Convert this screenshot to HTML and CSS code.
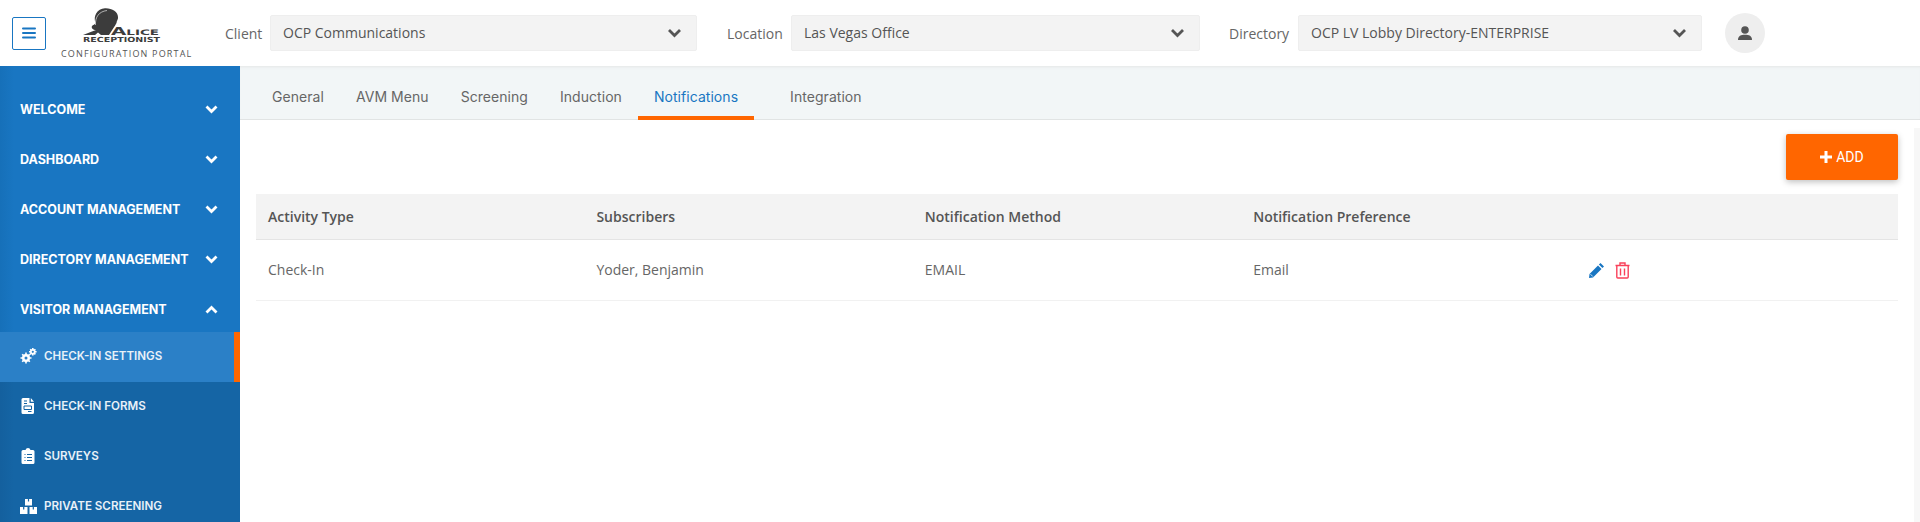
FILE: index.html
```html
<!DOCTYPE html>
<html lang="en">
<head>
<meta charset="utf-8">
<title>Alice Receptionist Configuration Portal</title>
<link rel="stylesheet" href="styles.css">
</head>
<body>
<header class="topbar">
  <button class="menu-btn" aria-label="Menu">
    <svg width="14" height="12" viewBox="0 0 14 12"><path d="M1 1.500h12M1 6h12M1 10.500h12" stroke="#1976c2" stroke-width="2" stroke-linecap="round"/></svg>
  </button>
  <div class="logo">
    <svg class="logo-mark" width="80" height="35" viewBox="0 0 80 35">
      <path d="M0 27 L9 23.500 L13 22 C10 22 8 20 9 18 C10 16.500 12 17 12.500 15 C10 8 14 1 22 0.300 C29 0 35 4 35 9 C35.500 11 33.500 13 33.500 15 C32 18 29 22 26 27 L18 27 L15 24.500 L12 27 Z" fill="#3c3c3c"/>
      <path d="M12.500 17 C12 9 16 3.500 24 2.500" stroke="#fff" stroke-width="0.600" fill="none"/>
      <text x="28" y="27" class="logo-alice" textLength="48" lengthAdjust="spacingAndGlyphs">A<tspan class="logo-small">LICE</tspan></text>
      <text x="0" y="34" class="logo-recep" textLength="77" lengthAdjust="spacingAndGlyphs">RECEPTIONIST</text>
    </svg>
    <div class="logo-caption">CONFIGURATION PORTAL</div>
  </div>
  <label class="field-label label-client">Client</label>
  <div class="select select-client"><span>OCP Communications</span>
    <svg class="caret" width="15" height="10" viewBox="0 0 15 10"><path d="M2 2 L7.500 7.500 L13 2" stroke="#555" stroke-width="2.800" fill="none"/></svg>
  </div>
  <label class="field-label label-location">Location</label>
  <div class="select select-location"><span>Las Vegas Office</span>
    <svg class="caret" width="15" height="10" viewBox="0 0 15 10"><path d="M2 2 L7.500 7.500 L13 2" stroke="#555" stroke-width="2.800" fill="none"/></svg>
  </div>
  <label class="field-label label-directory">Directory</label>
  <div class="select select-directory"><span>OCP LV Lobby Directory-ENTERPRISE</span>
    <svg class="caret" width="15" height="10" viewBox="0 0 15 10"><path d="M2 2 L7.500 7.500 L13 2" stroke="#555" stroke-width="2.800" fill="none"/></svg>
  </div>
  <div class="avatar">
    <svg width="14" height="14" viewBox="0 0 14 14"><circle cx="7" cy="4" r="3.800" fill="#555"/><path d="M0 14 C0 10 3 8.800 7 8.800 C11 8.800 14 10 14 14 Z" fill="#555"/></svg>
  </div>
</header>
<div class="layout">
  <nav class="sidebar">
    <div class="nav-item"><span>WELCOME</span><svg class="chev" width="13" height="9" viewBox="0 0 13 9"><path d="M1.500 1.500 L6.500 6.500 L11.500 1.500" stroke="#fff" stroke-width="2.800" fill="none"/></svg></div>
    <div class="nav-item"><span>DASHBOARD</span><svg class="chev" width="13" height="9" viewBox="0 0 13 9"><path d="M1.500 1.500 L6.500 6.500 L11.500 1.500" stroke="#fff" stroke-width="2.800" fill="none"/></svg></div>
    <div class="nav-item"><span>ACCOUNT MANAGEMENT</span><svg class="chev" width="13" height="9" viewBox="0 0 13 9"><path d="M1.500 1.500 L6.500 6.500 L11.500 1.500" stroke="#fff" stroke-width="2.800" fill="none"/></svg></div>
    <div class="nav-item"><span>DIRECTORY MANAGEMENT</span><svg class="chev" width="13" height="9" viewBox="0 0 13 9"><path d="M1.500 1.500 L6.500 6.500 L11.500 1.500" stroke="#fff" stroke-width="2.800" fill="none"/></svg></div>
    <div class="nav-item nav-open"><span>VISITOR MANAGEMENT</span><svg class="chev" width="13" height="9" viewBox="0 0 13 9"><path d="M1.500 7.500 L6.500 2.500 L11.500 7.500" stroke="#fff" stroke-width="2.800" fill="none"/></svg></div>
    <div class="submenu">
      <div class="sub-item active">
        <svg class="sub-icon" width="17" height="16" viewBox="0 0 17 16"><g fill="#fff"><circle cx="6" cy="10" r="4"/><circle cx="12.800" cy="3.800" r="2.700"/></g><g stroke="#fff" stroke-width="1.600"><path d="M6 4.500v11M.5 10h11M2.200 6.200l7.600 7.600M9.800 6.200l-7.600 7.600M12.800 0v7.600M9 3.800h7.600M10.200 1.200l5.200 5.200M15.400 1.200l-5.200 5.200"/></g><circle cx="6" cy="10" r="1.500" fill="#2b80c7"/><circle cx="12.800" cy="3.800" r="1.100" fill="#2b80c7"/></svg>
        <span>CHECK-IN SETTINGS</span></div>
      <div class="sub-item">
        <svg class="sub-icon" width="17" height="16" viewBox="0 0 17 16"><path d="M3 0 H9.500 V5 H14 V14.500 Q14 16 12.500 16 H3 Q1.500 16 1.500 14.500 V1.500 Q1.500 0 3 0Z M10.800 0 L14 3.700 H10.800Z" fill="#fff"/><path d="M4 3h3M4 5.500h3M4 8h7.500v3.500H4ZM8 13.500h3.500" stroke="#1565a5" stroke-width="1" fill="none"/></svg>
        <span>CHECK-IN FORMS</span></div>
      <div class="sub-item">
        <svg class="sub-icon" width="17" height="16" viewBox="0 0 17 16"><path d="M3 2 H5.500 Q6 0 8 0 Q10 0 10.500 2 H13 Q14.500 2 14.500 3.500 V14.500 Q14.500 16 13 16 H3 Q1.500 16 1.500 14.500 V3.500 Q1.500 2 3 2Z" fill="#fff"/><path d="M4.500 6.500h1M7 6.500h5M4.500 9.500h1M7 9.500h5M4.500 12.500h1M7 12.500h5" stroke="#1565a5" stroke-width="1.100"/></svg>
        <span>SURVEYS</span></div>
      <div class="sub-item">
        <svg class="sub-icon" width="17" height="16" viewBox="0 0 17 16"><path d="M5 1h7v6.500H5ZM0 9h7.500v7H0ZM9.500 9H17v7H9.500Z" fill="#fff"/><path d="M8.500 1v2.500M3.700 9v2.500M13.300 9v2.500" stroke="#1565a5" stroke-width="1.200"/></svg>
        <span>PRIVATE SCREENING</span></div>
    </div>
  </nav>
  <main class="main">
    <div class="tabs">
      <a class="tab">General</a>
      <a class="tab">AVM Menu</a>
      <a class="tab">Screening</a>
      <a class="tab">Induction</a>
      <a class="tab tab-active">Notifications</a>
      <a class="tab tab-gap">Integration</a>
    </div>
    <div class="panel">
      <div class="panel-body">
        <div class="toolbar">
          <button class="add-btn"><svg width="12" height="12" viewBox="0 0 12 12"><path d="M6 0v12M0 6h12" stroke="#fff" stroke-width="3"/></svg>ADD</button>
        </div>
        <table class="grid">
          <thead>
            <tr><th>Activity Type</th><th>Subscribers</th><th>Notification Method</th><th>Notification Preference</th><th></th></tr>
          </thead>
          <tbody>
            <tr>
              <td>Check-In</td><td>Yoder, Benjamin</td><td>EMAIL</td><td>Email</td>
              <td class="actions">
                <svg class="act-edit" width="17" height="17" viewBox="0 0 17 17"><path d="M12.500 1 L16 4.500 L14.400 6.100 L10.900 2.600 Z M10 3.500 L13.500 7 L5 15.500 L1 16 L1.500 12 Z" fill="#1976c2"/><path d="M2.500 12.200 L4.800 14.500" stroke="#fff" stroke-width="0.800"/></svg>
                <svg width="15" height="17" viewBox="0 0 15 17"><path d="M.5 3.500h14M5 3.500V1h5v2.500M1.800 3.500V15q0 1 1 1h9.400q1 0 1-1V3.500M5.500 6.500v7M9.500 6.500v7" stroke="#f9405a" stroke-width="1.400" fill="none"/></svg>
              </td>
            </tr>
          </tbody>
        </table>
      </div>
      <div class="scroll-track"></div>
    </div>
  </main>
</div>
</body>
</html>
```
FILE: styles.css
```css
* { box-sizing: border-box; }
html, body { margin: 0; height: 100%; overflow: hidden; }
body {
  display: flex;
  flex-direction: column;
  background: #fff;
  color: #555;
  font-family: "Open Sans", "Liberation Sans", sans-serif;
  font-size: 14px;
}

.topbar {
  height: 66px;
  flex: none;
  display: flex;
  align-items: center;
  padding-left: 12px;
  background: #fff;
}
.menu-btn {
  width: 34px;
  height: 33px;
  padding: 0;
  display: flex;
  align-items: center;
  justify-content: center;
  border: 1px solid #1976c2;
  border-radius: 2px;
  background: #fff;
}
.logo {
  width: 179px;
  height: 66px;
  display: flex;
  flex-direction: column;
  align-items: flex-start;
  padding: 8px 0 0 15px;
}
.logo-mark { margin-left: 22px; display: block; flex: none; }
.logo-alice { font: 700 11px "DejaVu Sans", sans-serif; fill: #3c3c3c; }
.logo-small { font-size: 7.500px; }
.logo-recep { font: 700 7px "DejaVu Sans", sans-serif; fill: #3c3c3c; }
.logo-caption {
  margin-top: 5px;
  font-size: 9px;
  line-height: 12px;
  letter-spacing: 1.180px;
  color: #555;
  white-space: nowrap;
}
.field-label { color: #666; font-size: 14px; white-space: nowrap; }
.label-client { width: 45px; }
.label-location { width: 64px; margin-left: 30px; }
.label-directory { width: 69px; margin-left: 29px; }
.select {
  height: 36px;
  display: flex;
  align-items: center;
  justify-content: space-between;
  padding: 0 14px 0 12px;
  background: #f3f3f3;
  border: 1px solid #eee;
  border-radius: 2px;
  font-size: 14px;
  color: #555;
}
.select-client { width: 427px; }
.select-location { width: 409px; }
.select-directory { width: 404px; }
.select span { position: relative; top: -1px; }
.avatar {
  width: 40px;
  height: 40px;
  margin-left: 23px;
  border-radius: 50%;
  background: #eeeeee;
  display: flex;
  align-items: center;
  justify-content: center;
}

.layout { flex: 1; min-height: 0; display: flex; }

.sidebar {
  width: 240px;
  flex: none;
  padding-top: 19px;
  background: linear-gradient(90deg, #1670b9 0, #1976c2 14px);
  overflow: hidden;
}
.nav-item {
  height: 50px;
  display: flex;
  align-items: center;
  justify-content: space-between;
  padding: 0 22px 1px 20px;
  color: #fff;
  font-family: Inter, "Liberation Sans", sans-serif;
  font-weight: 700;
  font-size: 12.500px;
  white-space: nowrap;
}
.nav-open { margin-bottom: -3px; }
.submenu { background: linear-gradient(90deg, #14609e 0, #1565a5 14px); }
.sub-item {
  height: 50px;
  display: flex;
  align-items: center;
  gap: 7px;
  padding: 0 0 2px 20px;
  color: #e8f1f8;
  font-family: Inter, "Liberation Sans", sans-serif;
  font-weight: 600;
  font-size: 11.600px;
  white-space: nowrap;
}
.sub-item.active {
  background: #2b80c7;
  border-right: 6px solid #ff6600;
}
.sub-icon { flex: none; }

.main { flex: 1; min-width: 0; display: flex; flex-direction: column; }
.tabs {
  height: 54px;
  flex: none;
  display: flex;
  padding-left: 16px;
  background: #f2f6f7;
  box-shadow: inset 0 3px 3px -2px #e4e6e6, inset 0 -1px 0 #e1e4e4;
}
.tab {
  height: 54px;
  padding: 0 16px;
  line-height: 61px;
  border-bottom: 4px solid transparent;
  font-family: Inter, "Liberation Sans", sans-serif;
  font-size: 14px;
  letter-spacing: .05px;
  color: #666;
  white-space: nowrap;
}
.tab-active { color: #1976c2; border-bottom-color: #ff6600; }
.tab-gap { margin-left: 20px; }

.panel { flex: 1; min-height: 0; display: flex; }
.panel-body { flex: 1; min-width: 0; padding: 14px 16px 0; }
.scroll-track { width: 6px; margin-top: 8px; background: #f7f7f7; }

.toolbar { display: flex; justify-content: flex-end; margin-bottom: 14px; }
.add-btn {
  width: 112px;
  height: 46px;
  display: flex;
  align-items: center;
  justify-content: center;
  gap: 4px;
  border: 0;
  border-radius: 2px;
  background: #ff6600;
  color: #fff;
  font-family: Roboto, "Liberation Sans", sans-serif;
  font-size: 14px;
  font-weight: 400;
  box-shadow: 0 2px 6px rgba(0, 0, 0, .25);
}

.grid { width: 100%; table-layout: fixed; border-collapse: collapse; }
.grid th {
  height: 45px;
  padding: 0 12px;
  text-align: left;
  background: #f3f3f3;
  border-bottom: 1px solid #e4e4e4;
  font-weight: 600;
  font-size: 14px;
  color: #555;
}
.grid td {
  height: 61px;
  padding: 0 12px;
  border-bottom: 1px solid #f1f1f1;
  font-size: 14px;
  color: #666;
}
.grid td.actions { padding-left: 18px; }
.actions svg { vertical-align: middle; }
.actions .act-edit { margin-right: 7px; }
```
